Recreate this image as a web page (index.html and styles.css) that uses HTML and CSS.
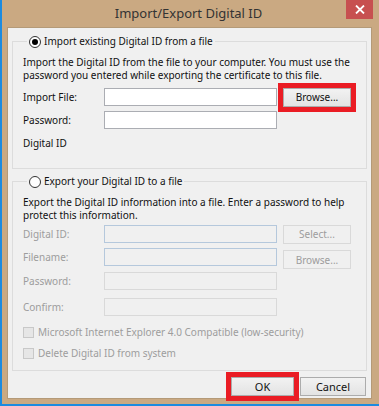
FILE: index.html
```html
<!DOCTYPE html>
<html lang="en">
<head>
    <meta charset="UTF-8">
    <title>Import/Export Digital ID</title>
    <link rel="stylesheet" href="styles.css">
</head>
<body>
    <div class="window">
        <div class="titlebar">
            <span class="title">Import/Export Digital ID</span>
            <button class="close" aria-label="Close">
                <svg width="10" height="9" viewBox="0 0 10 9"><path d="M1 0.5 L9 8.5 M9 0.5 L1 8.5" stroke="#fff" stroke-width="1.8"/></svg>
            </button>
        </div>
        <div class="client">
            <fieldset class="group">
                <legend><span class="radio checked"></span>Import existing Digital ID from a file</legend>
                <p class="desc">Import the Digital ID from the file to your computer. You must use the<br>password you entered while exporting the certificate to this file.</p>
                <div class="row first">
                    <label>Import File:</label>
                    <input type="text" class="field">
                    <button class="btn hl">Browse...</button>
                </div>
                <div class="row">
                    <label>Password:</label>
                    <input type="password" class="field">
                </div>
                <div class="note">Digital ID</div>
            </fieldset>

            <fieldset class="group second">
                <legend><span class="radio"></span>Export your Digital ID to a file</legend>
                <p class="desc">Export the Digital ID information into a file. Enter a password to help<br>protect this information.</p>
                <div class="row first off">
                    <label>Digital ID:</label>
                    <input type="text" class="field blue" disabled>
                    <button class="btn" disabled>Select...</button>
                </div>
                <div class="row off">
                    <label>Filename:</label>
                    <input type="text" class="field blue" disabled>
                    <button class="btn low" disabled>Browse...</button>
                </div>
                <div class="row off pw">
                    <label>Password:</label>
                    <input type="password" class="field" disabled>
                </div>
                <div class="row off confirm">
                    <label>Confirm:</label>
                    <input type="password" class="field" disabled>
                </div>
                <div class="check first"><span class="box"></span>Microsoft Internet Explorer 4.0 Compatible (low-security)</div>
                <div class="check"><span class="box"></span>Delete Digital ID from system</div>
            </fieldset>

            <div class="footer">
                <button class="btn action hl">OK</button>
                <button class="btn action cancel">Cancel</button>
            </div>
        </div>
    </div>
</body>
</html>
```

FILE: styles.css
```css
* {
    box-sizing: border-box;
    font-family: "Noto Sans", sans-serif;
}
body {
    margin: 0;
    background: #caa982;
}
.window {
    width: 379px;
    height: 406px;
    background-color: #caa982;
    border-left: 2px solid #1c8be0;
    border-bottom: 2px solid #1c8be0;
    padding: 0 7px 5px 5px;
    display: flex;
    flex-direction: column;
}
.titlebar {
    height: 27px;
    display: grid;
    grid-template-columns: 1fr auto 1fr;
    align-items: start;
}
.title {
    grid-column: 2;
    font-size: 13px;
    color: #333;
    padding-top: 4px;
    margin-right: 2px;
}
.close {
    grid-column: 3;
    justify-self: end;
    width: 27px;
    height: 19px;
    margin-right: -1px;
    border: none;
    background-color: #c75050;
    display: flex;
    align-items: center;
    justify-content: center;
    padding: 0;
}
.client {
    flex: 1;
    background-color: #f0f0f0;
    border: 1px solid #b49a78;
    padding: 0 4px;
    font-size: 10px;
    color: #111;
}
.group {
    margin: 7px 0 0 0;
    padding: 0 0 0 10px;
    border: 1px solid #dcdcdc;
    height: 134px;
}
.group.second {
    margin-top: 6px;
    height: 196px;
}
.group legend {
    margin-left: 4px;
    padding: 0 2px;
    display: flex;
    align-items: center;
    gap: 3px;
    line-height: 13px;
}
.radio {
    width: 12px;
    height: 12px;
    border: 1px solid #333;
    border-radius: 50%;
    background-color: #fff;
    display: inline-flex;
    align-items: center;
    justify-content: center;
}
.radio.checked::after {
    content: '';
    width: 6px;
    height: 6px;
    border-radius: 50%;
    background-color: #000;
}
.desc {
    margin: 8px 0 0 0;
    line-height: 13px;
    white-space: nowrap;
}
.row {
    display: flex;
    align-items: center;
    height: 18px;
    margin-top: 5px;
}
.row.first {
    margin-top: 6px;
}
.second .row.first {
    margin-top: 3px;
}
.row.pw {
    margin-top: 6px;
}
.row.confirm {
    margin-top: 8px;
}
.row label {
    width: 81px;
}
.field {
    width: 173px;
    height: 18px;
    border: 1px solid #abadb3;
    background-color: #fff;
    margin: 0;
}
.row.off label {
    color: #9d9d9d;
}
.row.off .field {
    background-color: #f0f0f0;
    border-color: #d9d9d9;
}
.row.off .field.blue {
    border-color: #b5c8dc;
}
.btn {
    margin-left: 6px;
    width: 68px;
    height: 19px;
    padding: 0;
    font-size: 10px;
    color: #111;
    background: linear-gradient(#f2f2f2, #e3e3e3);
    border: 1px solid #acacac;
}
.btn:disabled {
    color: #9d9d9d;
    background: #f0f0f0;
    border-color: #d9d9d9;
}
.btn.low {
    margin-top: 5px;
}
.hl {
    outline: 5px solid #ea1c24;
}
.note {
    margin-top: 8px;
    line-height: 13px;
}
.check {
    display: flex;
    align-items: center;
    gap: 4px;
    color: #9d9d9d;
    margin-top: 8px;
    line-height: 13px;
}
.check.first {
    margin-top: 10px;
}
.box {
    width: 11px;
    height: 11px;
    border: 1px solid #c8c8c8;
    background-color: #e6e6e6;
}
.footer {
    display: flex;
    justify-content: flex-end;
    gap: 6px;
    margin-top: 6px;
    padding-right: 1px;
}
.btn.action {
    margin-left: 0;
    width: 63px;
    height: 19px;
    font-size: 11px;
}
.btn.cancel {
    width: 66px;
}
```
